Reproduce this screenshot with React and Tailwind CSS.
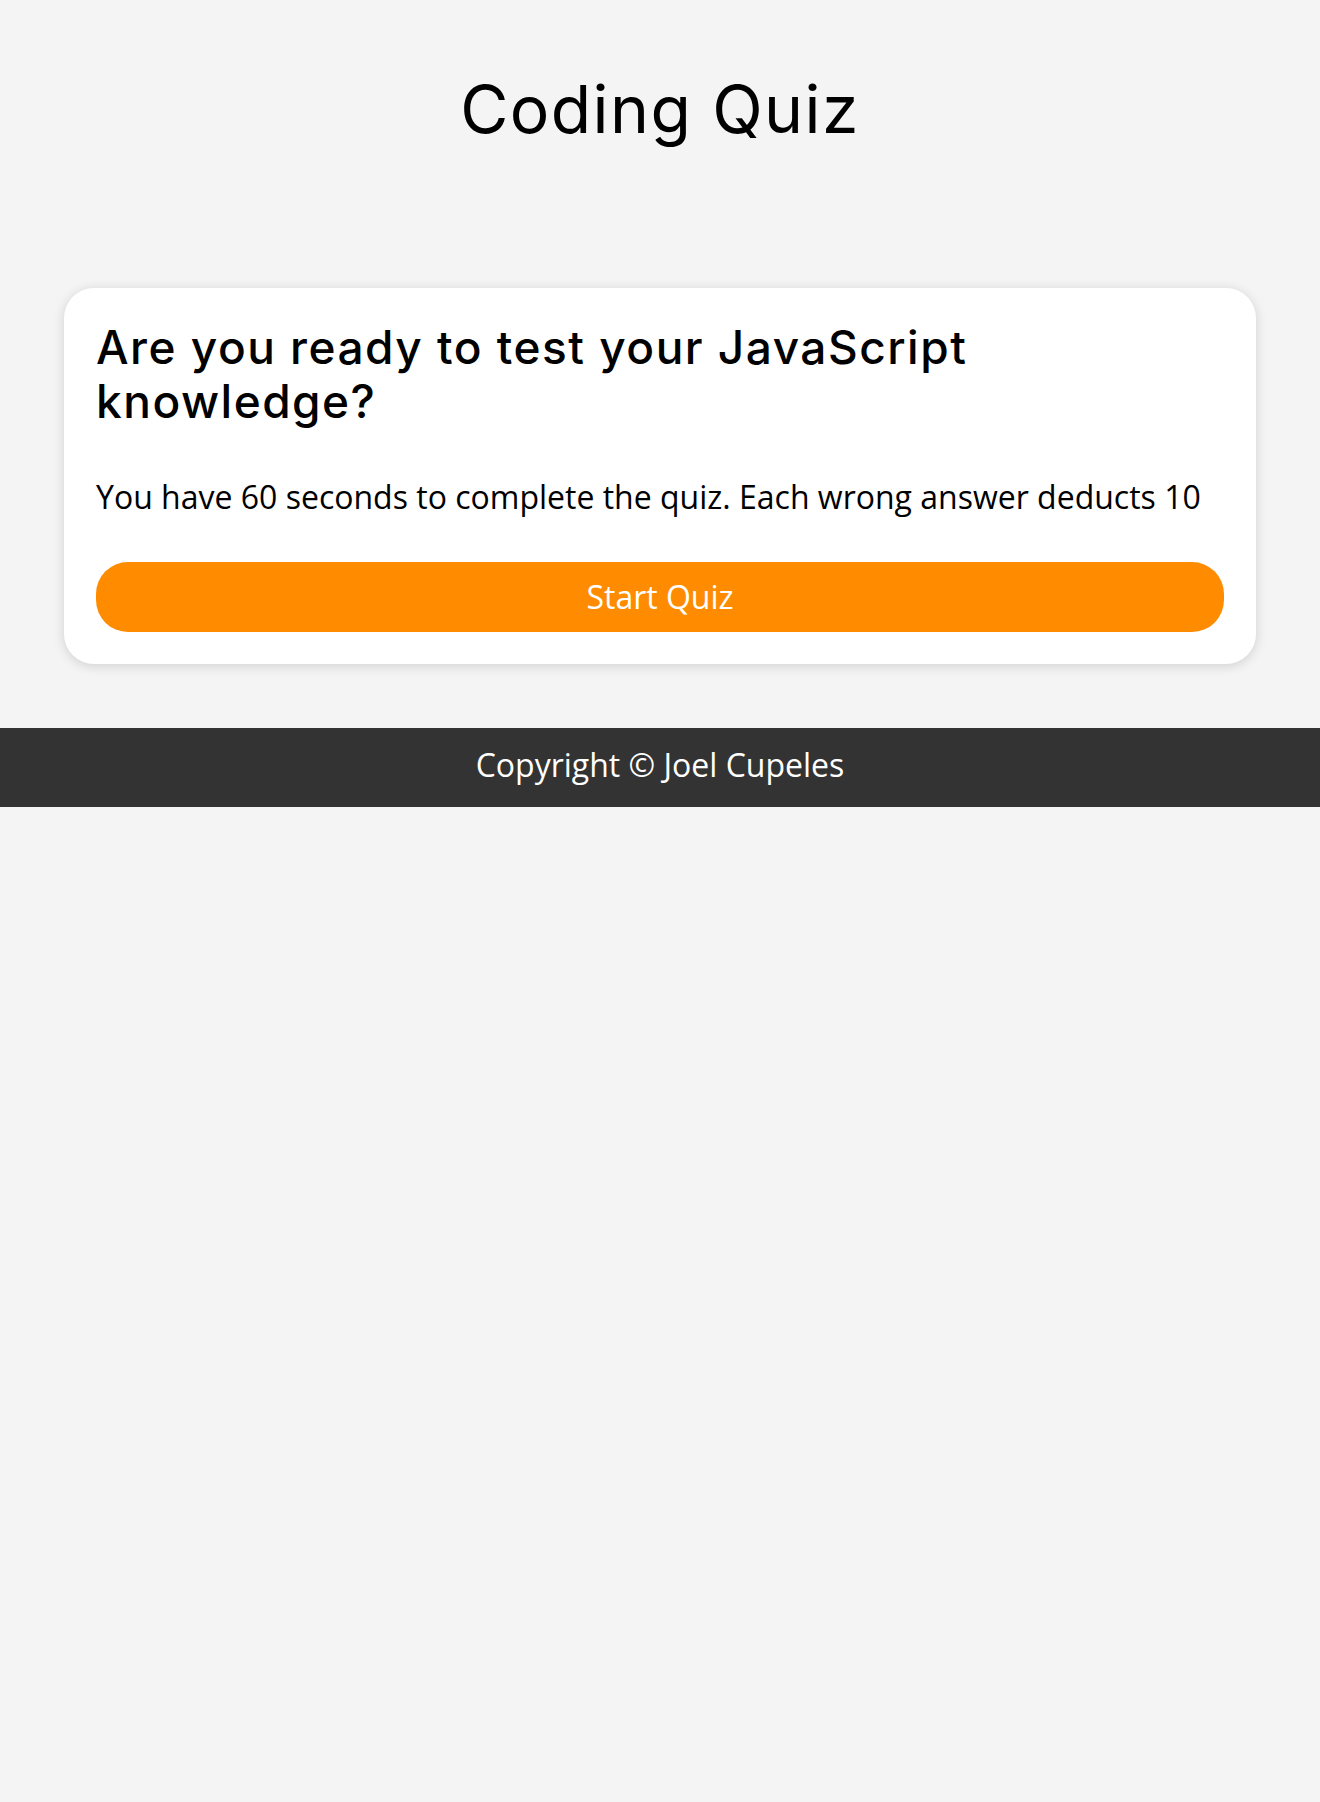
import { useState } from 'react';

export default function App() {
  const [started, setStarted] = useState(false);

  return (
    <div className="min-h-[1802px] bg-[#f4f4f4] text-black">
      <header className="pt-[69px] text-center">
        <h1 className="font-['Inter',sans-serif] text-[66px] leading-[80px] font-normal tracking-[1.4px]">
          Coding Quiz
        </h1>
      </header>

      <main className="px-16 mt-[139px]">
        <section className="bg-white rounded-[30px] shadow-[0_2px_12px_rgba(0,0,0,0.15)] p-8">
          <h2 className="font-['Inter',sans-serif] text-[46px] leading-[54px] font-medium tracking-[1.5px]">
            Are you ready to test your JavaScript
            <br />
            knowledge?
          </h2>
          <p className="mt-[49px] font-['Open_Sans',sans-serif] text-[32px] leading-[40px] whitespace-nowrap">
            You have 60 seconds to complete the quiz. Each wrong answer deducts 10
          </p>
          <button
            onClick={() => setStarted(!started)}
            className="mt-[45px] w-full h-[70px] rounded-[32px] bg-[#ff8c00] text-white font-['Open_Sans',sans-serif] text-[32px]"
          >
            Start Quiz
          </button>
        </section>
      </main>

      <footer className="mt-16 bg-[#333333] text-white text-center pt-[15px] pb-[20px] font-['Open_Sans',sans-serif] text-[32px] leading-[44px]">
        Copyright © Joel Cupeles
      </footer>
    </div>
  );
}
